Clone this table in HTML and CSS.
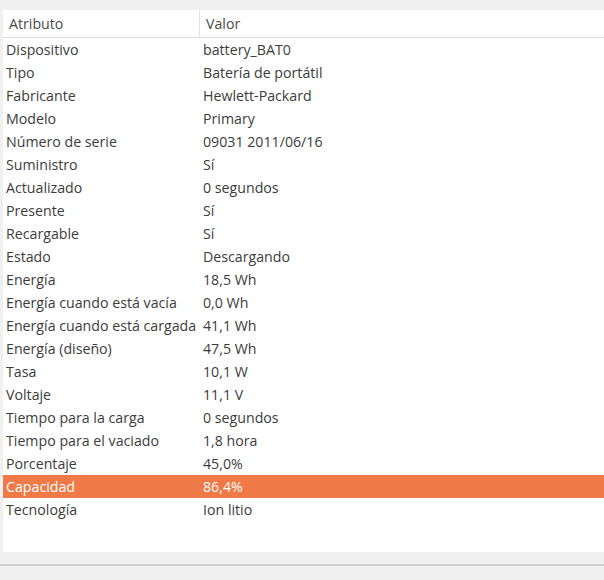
FILE: index.html
```html
<!DOCTYPE html>
<html lang="es">
<head>
<meta charset="utf-8">
<link rel="stylesheet" href="styles.css">
</head>
<body>
<div class="window">
  <div class="table">
    <div class="head">
      <div class="hcell c1">Atributo</div>
      <div class="hcell c2">Valor</div>
    </div>
    <div class="rows">
      <div class="row"><span class="k">Dispositivo</span><span class="v">battery_BAT0</span></div>
      <div class="row"><span class="k">Tipo</span><span class="v">Batería de portátil</span></div>
      <div class="row"><span class="k">Fabricante</span><span class="v">Hewlett-Packard</span></div>
      <div class="row"><span class="k">Modelo</span><span class="v">Primary</span></div>
      <div class="row"><span class="k">Número de serie</span><span class="v">09031 2011/06/16</span></div>
      <div class="row"><span class="k">Suministro</span><span class="v">Sí</span></div>
      <div class="row"><span class="k">Actualizado</span><span class="v">0 segundos</span></div>
      <div class="row"><span class="k">Presente</span><span class="v">Sí</span></div>
      <div class="row"><span class="k">Recargable</span><span class="v">Sí</span></div>
      <div class="row"><span class="k">Estado</span><span class="v">Descargando</span></div>
      <div class="row"><span class="k">Energía</span><span class="v">18,5 Wh</span></div>
      <div class="row"><span class="k">Energía cuando está vacía</span><span class="v">0,0 Wh</span></div>
      <div class="row"><span class="k">Energía cuando está cargada</span><span class="v">41,1 Wh</span></div>
      <div class="row"><span class="k">Energía (diseño)</span><span class="v">47,5 Wh</span></div>
      <div class="row"><span class="k">Tasa</span><span class="v">10,1 W</span></div>
      <div class="row"><span class="k">Voltaje</span><span class="v">11,1 V</span></div>
      <div class="row"><span class="k">Tiempo para la carga</span><span class="v">0 segundos</span></div>
      <div class="row"><span class="k">Tiempo para el vaciado</span><span class="v">1,8 hora</span></div>
      <div class="row"><span class="k">Porcentaje</span><span class="v">45,0%</span></div>
      <div class="row selected"><span class="k">Capacidad</span><span class="v">86,4%</span></div>
      <div class="row"><span class="k">Tecnología</span><span class="v">Ion litio</span></div>
    </div>
  </div>
  <div class="footer"></div>
</div>
</body>
</html>
```
FILE: styles.css
```css
html, body {
  margin: 0;
  padding: 0;
  background: #f0f0f0;
}
body {
  font-family: "Open Sans", "DejaVu Sans", sans-serif;
  font-size: 14.2px;
  color: #3c3c3c;
  width: 604px;
  height: 580px;
  overflow: hidden;
}
.window {
  padding-top: 10px;
  padding-left: 3px;
}
.table {
  background: #ffffff;
  height: 542px;
  display: flex;
  flex-direction: column;
}
.head {
  display: flex;
  height: 28px;
  border-bottom: 1px solid #dcdcdc;
  box-sizing: border-box;
  align-items: center;
}
.hcell {
  height: 100%;
  display: flex;
  align-items: center;
  color: #4a4a4a;
  box-sizing: border-box;
}
.hcell.c1 {
  width: 197px;
  padding-left: 6px;
  border-right: 1px solid #e2e2e2;
}
.hcell.c2 {
  padding-left: 6px;
}
.row {
  display: flex;
  height: 23px;
  align-items: center;
}
.k {
  box-sizing: border-box;
  width: 200px;
  padding-left: 3px;
  white-space: nowrap;
}
.v {
  padding-left: 0;
}
.row.selected {
  background: #ef7a48;
  color: #ffffff;
}
.footer {
  margin-top: 12px;
  margin-left: -3px;
  border-top: 2px solid #cfcfcf;
  height: 14px;
}
```
